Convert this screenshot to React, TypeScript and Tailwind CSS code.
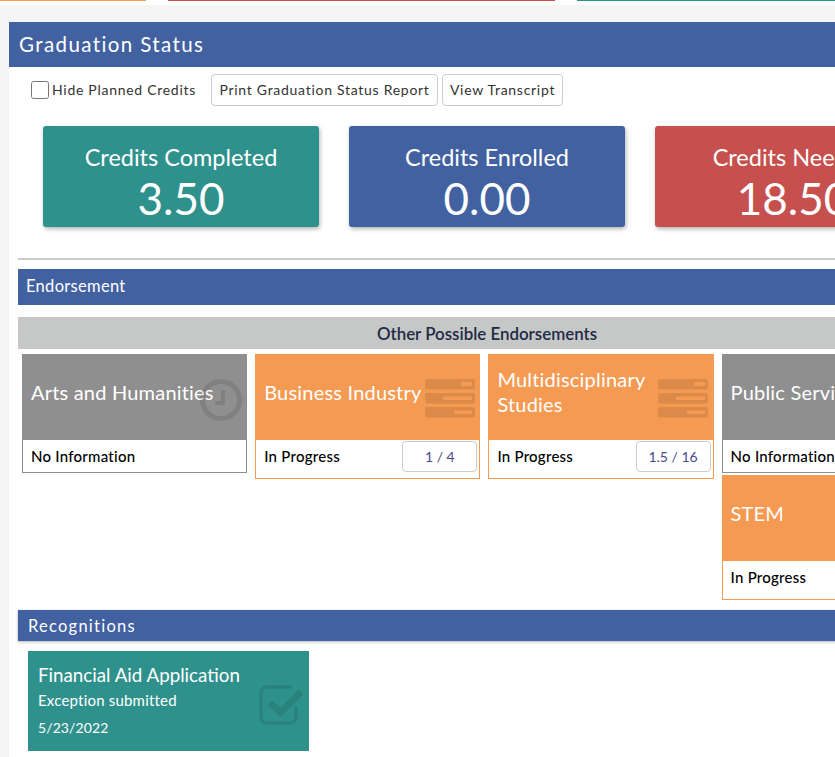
import React from 'react'

function ClockIcon() {
  return (
    <svg viewBox="0 0 42 42" className="absolute left-[178px] top-[25px] w-[42px] h-[42px] text-black/10" fill="none" stroke="currentColor">
      <circle cx="21" cy="21" r="18.5" strokeWidth="5" />
      <path d="M23 11v13H15" strokeWidth="4" />
    </svg>
  )
}

function TasksIcon() {
  return (
    <svg viewBox="0 0 50 39" className="absolute left-[170px] top-[25px] w-[50px] h-[39px] text-black/10" fill="currentColor" fillRule="evenodd">
      <path d="M2 0h46a2 2 0 0 1 2 2v6.500a2 2 0 0 1-2 2H2a2 2 0 0 1-2-2V2a2 2 0 0 1 2-2zM36 3v4h11V3z" />
      <path d="M2 14h46a2 2 0 0 1 2 2v6.500a2 2 0 0 1-2 2H2a2 2 0 0 1-2-2V16a2 2 0 0 1 2-2zM18 17.500v3.500h29v-3.500z" />
      <path d="M2 28h46a2 2 0 0 1 2 2v6.500a2 2 0 0 1-2 2H2a2 2 0 0 1-2-2V30a2 2 0 0 1 2-2zM29 31.500v3.500h18v-3.500z" />
    </svg>
  )
}

function CheckIcon() {
  return (
    <svg viewBox="0 0 46 40" className="absolute left-[231px] top-[34px] w-[46px] h-[40px] text-black/10" fill="none" stroke="currentColor">
      <path d="M37 21v11a6 6 0 0 1-6 6H8a6 6 0 0 1-6-6V8a6 6 0 0 1 6-6h25" strokeWidth="3.500" />
      <path d="M11 18l10.500 9.500L42 7" strokeWidth="7" />
    </svg>
  )
}

interface TileProps {
  title: React.ReactNode
  status: string
  tone: 'gray' | 'orange'
  count?: string
  icon?: React.ReactNode
}

function Tile({ title, status, tone, count, icon }: TileProps) {
  const isOrange = tone === 'orange'
  return (
    <div className={`float-left ml-[4px] mr-[4px] mb-[2px] w-[225.2px] bg-white border ${isOrange ? 'border-[#f49a52]' : 'border-[#8f8f8f]'}`}>
      <div className={`relative h-[86px] -mt-px -mx-px flex items-center pl-[9px] pr-[60px] ${isOrange ? 'bg-[#f49a52]' : 'bg-[#8f8f8f]'}`}>
        <span className="text-white text-[20px] leading-[25px] tracking-[0.2px] -mt-[9px] whitespace-nowrap">{title}</span>
        {icon}
      </div>
      <div className={`flex items-center justify-between mt-[1px] h-[31px] pl-[8px] pr-[2px] ${count ? 'mb-[6px]' : ''}`}>
        <span className="text-black text-[15px] font-medium tracking-[0.25px]">{status}</span>
        {count && (
          <span className="flex items-center justify-center w-[75px] h-[31px] border border-[#ccc] rounded-[4px] text-[14px] text-[#4b4a8f]">
            {count}
          </span>
        )}
      </div>
    </div>
  )
}

function StatCard({ label, value, color }: { label: string; value: string; color: string }) {
  return (
    <div className={`w-[276px] h-[101px] rounded-[3px] text-white text-center shadow-[1px_2px_4px_rgba(0,0,0,0.3)] pt-[17px] ${color}`}>
      <div className="text-[23.500px] leading-[29px]">{label}</div>
      <div className="text-[44px] leading-[52px]">{value}</div>
    </div>
  )
}

export default function App() {
  return (
    <div className="w-[835px] h-[757px] overflow-hidden bg-white [font-family:Lato,sans-serif]">
      {/* Top stripes */}
      <div className="flex h-[5px] w-[1000px] bg-white items-start">
        <div className="w-[146px] h-[1px] bg-[#f49a52]" />
        <div className="ml-[22px] w-[387px] h-[1px] bg-[#c5504d]" />
        <div className="ml-[22px] w-[387px] h-[1px] bg-[#2f918c]" />
      </div>

      <div className="bg-[#f5f5f5] pl-[9px] pt-[17px] h-[752px]">
        <div className="w-[956px] h-full bg-white">
          <div className="h-[45px] flex items-center pl-[10px] bg-[#4261a1] text-white text-[20.500px] tracking-[1.400px]">
            Graduation Status
          </div>

          {/* Toolbar */}
          <div className="flex items-center h-[46px] pl-[22px] text-[14px] text-[#333] tracking-[0.72px]">
            <input type="checkbox" className="w-[18px] h-[18px] m-0" />
            <span className="ml-[3px] -mt-[1px]">Hide Planned Credits</span>
            <button className="ml-[15px] w-[227px] h-[32px] pb-[1px] border border-[#ccc] rounded-[4px] bg-white">Print Graduation Status Report</button>
            <button className="ml-[4px] w-[121px] h-[32px] pb-[1px] border border-[#ccc] rounded-[4px] bg-white">View Transcript</button>
          </div>

          <div className="flex justify-center gap-[30px] w-[938px] ml-[9px] mt-[13px]">
            <StatCard label="Credits Completed" value="3.50" color="bg-[#2f918c]" />
            <StatCard label="Credits Enrolled" value="0.00" color="bg-[#4261a1]" />
            <StatCard label="Credits Needed" value="18.50" color="bg-[#c5504d]" />
          </div>

          <div className="w-[938px] ml-[9px] mt-[31px] border-t-2 border-[#ccc]" />

          <div className="w-[938px] ml-[9px] mt-[9px] h-[36px] flex items-center pl-[8px] pb-[2px] bg-[#4261a1] text-white text-[16.500px] tracking-[0.3px]">
            Endorsement
          </div>

          <div className="w-[938px] ml-[9px] mt-[12px] h-[32px] flex items-center justify-center pt-[2px] bg-[#c6c8c7] text-[#1f2a44] text-[16.900px] font-semibold">
            Other Possible Endorsements
          </div>

          {/* Tiles float so the short ones leave room underneath */}
          <div className="w-[938px] ml-[9px] pt-[5px] flow-root">
            <Tile title="Arts and Humanities" status="No Information" tone="gray" icon={<ClockIcon />} />
            <Tile title="Business Industry" status="In Progress" tone="orange" count="1 / 4" icon={<TasksIcon />} />
            <Tile title={<span className="block -mt-[2px]">Multidisciplinary<br />Studies</span>} status="In Progress" tone="orange" count="1.5 / 16" icon={<TasksIcon />} />
            <Tile title="Public Service" status="No Information" tone="gray" icon={<ClockIcon />} />
            <Tile title="STEM" status="In Progress" tone="orange" count="0 / 4" icon={<TasksIcon />} />
          </div>

          <div className="w-[938px] ml-[9px] mt-[8px] h-[31px] flex items-center pl-[10px] pt-[1px] bg-[#4261a1] text-white text-[16.500px] tracking-[1.250px] shadow-[0_1px_3px_rgba(0,0,0,0.3)]">
            Recognitions
          </div>

          <div className="relative w-[281px] h-[100px] ml-[19px] mt-[10px] bg-[#2f918c] text-white pl-[10px] pt-[13px]">
            <div className="text-[18.750px] leading-[22px]">Financial Aid Application</div>
            <div className="text-[15px] leading-[18px] mt-[5px] tracking-[0.2px]">Exception submitted</div>
            <div className="text-[14px] leading-[18px] mt-[10px] tracking-[0.1px]">5/23/2022</div>
            <CheckIcon />
          </div>
        </div>
      </div>
    </div>
  )
}
